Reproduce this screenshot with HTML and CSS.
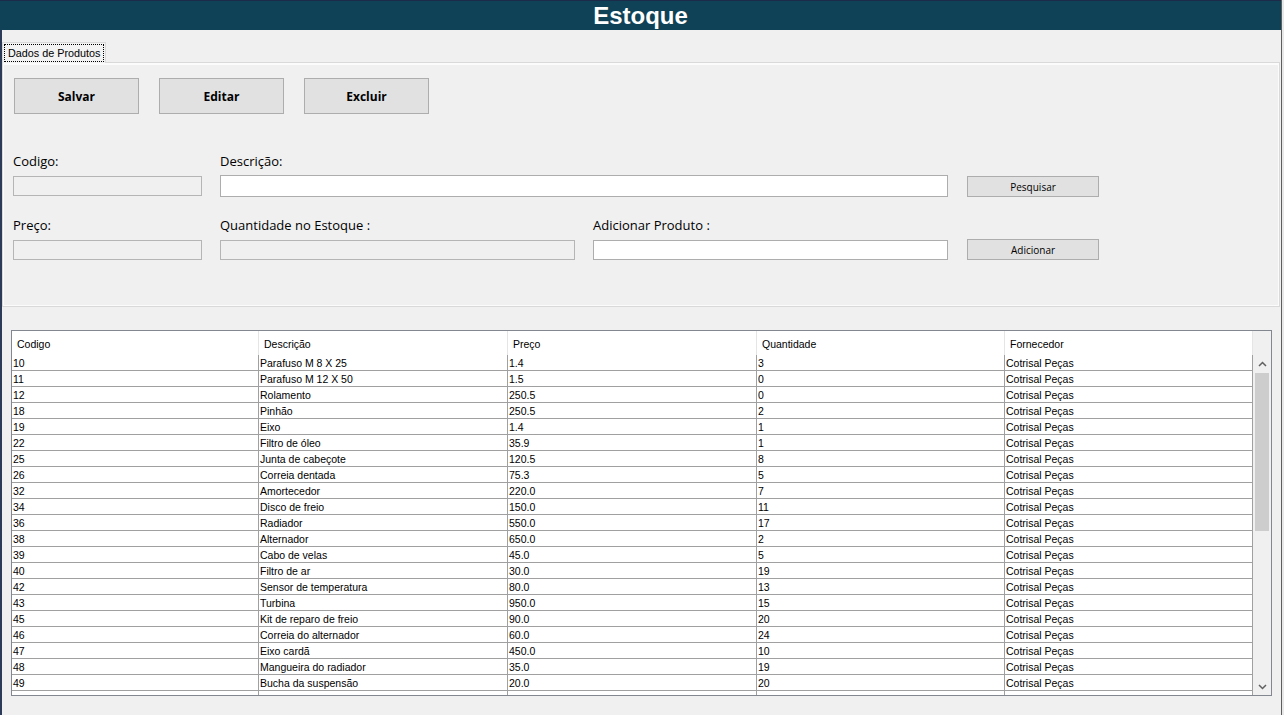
FILE: index.html
```html
<!DOCTYPE html>
<html lang="pt">
<head>
<meta charset="utf-8">
<title>Estoque</title>
<link rel="stylesheet" href="styles.css">
</head>
<body>
<div class="app">
  <header class="titlebar"><h1 class="title">Estoque</h1></header>
  <div class="content">
    <div class="tabstrip">
      <div class="tab"><span class="tab-label">Dados de Produtos</span></div>
    </div>
    <section class="panel">
      <div class="toolbar">
        <button class="btn-big">Salvar</button>
        <button class="btn-big">Editar</button>
        <button class="btn-big">Excluir</button>
      </div>
      <div class="form">
        <div class="field"><label class="lbl">Codigo:</label><input class="inp inp-disabled" disabled></div>
        <div class="field span2"><label class="lbl">Descrição:</label><input class="inp inp-tall"></div>
        <div class="field field-btn"><button class="btn-small">Pesquisar</button></div>

        <div class="field"><label class="lbl">Preço:</label><input class="inp inp-disabled" disabled></div>
        <div class="field"><label class="lbl">Quantidade no Estoque :</label><input class="inp inp-disabled" disabled></div>
        <div class="field"><label class="lbl">Adicionar Produto :</label><input class="inp"></div>
        <div class="field field-btn"><button class="btn-small">Adicionar</button></div>
      </div>
    </section>

    <div class="listview">
      <div class="lv-main">
        <div class="lv-head">
          <div class="hc">Codigo</div>
          <div class="hc">Descrição</div>
          <div class="hc">Preço</div>
          <div class="hc">Quantidade</div>
          <div class="hc">Fornecedor</div>
        </div>
        <div class="lv-body">
          <div class="lv-row"><div>10</div><div>Parafuso M 8 X 25</div><div>1.4</div><div>3</div><div>Cotrisal Peças</div></div>
          <div class="lv-row"><div>11</div><div>Parafuso M 12 X 50</div><div>1.5</div><div>0</div><div>Cotrisal Peças</div></div>
          <div class="lv-row"><div>12</div><div>Rolamento</div><div>250.5</div><div>0</div><div>Cotrisal Peças</div></div>
          <div class="lv-row"><div>18</div><div>Pinhão</div><div>250.5</div><div>2</div><div>Cotrisal Peças</div></div>
          <div class="lv-row"><div>19</div><div>Eixo</div><div>1.4</div><div>1</div><div>Cotrisal Peças</div></div>
          <div class="lv-row"><div>22</div><div>Filtro de óleo</div><div>35.9</div><div>1</div><div>Cotrisal Peças</div></div>
          <div class="lv-row"><div>25</div><div>Junta de cabeçote</div><div>120.5</div><div>8</div><div>Cotrisal Peças</div></div>
          <div class="lv-row"><div>26</div><div>Correia dentada</div><div>75.3</div><div>5</div><div>Cotrisal Peças</div></div>
          <div class="lv-row"><div>32</div><div>Amortecedor</div><div>220.0</div><div>7</div><div>Cotrisal Peças</div></div>
          <div class="lv-row"><div>34</div><div>Disco de freio</div><div>150.0</div><div>11</div><div>Cotrisal Peças</div></div>
          <div class="lv-row"><div>36</div><div>Radiador</div><div>550.0</div><div>17</div><div>Cotrisal Peças</div></div>
          <div class="lv-row"><div>38</div><div>Alternador</div><div>650.0</div><div>2</div><div>Cotrisal Peças</div></div>
          <div class="lv-row"><div>39</div><div>Cabo de velas</div><div>45.0</div><div>5</div><div>Cotrisal Peças</div></div>
          <div class="lv-row"><div>40</div><div>Filtro de ar</div><div>30.0</div><div>19</div><div>Cotrisal Peças</div></div>
          <div class="lv-row"><div>42</div><div>Sensor de temperatura</div><div>80.0</div><div>13</div><div>Cotrisal Peças</div></div>
          <div class="lv-row"><div>43</div><div>Turbina</div><div>950.0</div><div>15</div><div>Cotrisal Peças</div></div>
          <div class="lv-row"><div>45</div><div>Kit de reparo de freio</div><div>90.0</div><div>20</div><div>Cotrisal Peças</div></div>
          <div class="lv-row"><div>46</div><div>Correia do alternador</div><div>60.0</div><div>24</div><div>Cotrisal Peças</div></div>
          <div class="lv-row"><div>47</div><div>Eixo cardã</div><div>450.0</div><div>10</div><div>Cotrisal Peças</div></div>
          <div class="lv-row"><div>48</div><div>Mangueira do radiador</div><div>35.0</div><div>19</div><div>Cotrisal Peças</div></div>
          <div class="lv-row"><div>49</div><div>Bucha da suspensão</div><div>20.0</div><div>20</div><div>Cotrisal Peças</div></div>
          <div class="lv-row"><div>50</div><div>Válvula termostática</div><div>110.0</div><div>12</div><div>Cotrisal Peças</div></div>
        </div>
      </div>
      <div class="lv-side">
        <div class="corner"></div>
        <div class="vscroll">
          <div class="arrow"><svg width="9" height="6" viewBox="0 0 9 6"><polyline points="1,5 4.5,1.5 8,5" fill="none" stroke="#606060" stroke-width="1.5"/></svg></div>
          <div class="thumb"></div>
          <div class="track"></div>
          <div class="arrow"><svg width="9" height="6" viewBox="0 0 9 6"><polyline points="1,1 4.5,4.5 8,1" fill="none" stroke="#606060" stroke-width="1.5"/></svg></div>
        </div>
      </div>
    </div>
  </div>
</div>
</body>
</html>
```

FILE: styles.css
```css
* { box-sizing: border-box; }

html, body {
  margin: 0;
  padding: 0;
  background: #e8e8e8;
  overflow: hidden;
}

body {
  font-family: "Open Sans", "Liberation Sans", sans-serif;
  color: #000;
}

.app {
  width: 1282px;
  height: 715px;
  border-right: 1px solid #5e5e5e;
  background: #f0f0f0;
  display: flex;
  flex-direction: column;
}

.titlebar {
  height: 30px;
  background: #0f4257;
  border-top: 1px solid #1d2b4b;
  display: flex;
  justify-content: center;
  align-items: center;
  flex-shrink: 0;
}

.title {
  margin: 0;
  font-family: "Liberation Sans", Arial, sans-serif;
  font-weight: bold;
  font-size: 24px;
  line-height: 29px;
  color: #fff;
}

.content {
  flex: 1;
  border-left: 2px solid #2b3b58;
  display: flex;
  flex-direction: column;
}

.tabstrip {
  padding-top: 12px;
  display: flex;
}

.tab {
  position: relative;
  z-index: 1;
  width: 104px;
  height: 21px;
  margin-bottom: -1px;
  border: 1px solid #d9d9d9;
  border-bottom: none;
  background: #f3f3f3;
  padding: 1px 0 0 1px;
}

.tab-label {
  display: block;
  width: 100px;
  height: 18px;
  border: 1px dotted #000;
  font-family: "Liberation Sans", Arial, sans-serif;
  font-size: 10.8px;
  line-height: 16px;
  padding-left: 3px;
  white-space: nowrap;
}

.panel {
  height: 245px;
  margin-right: 1px;
  border: 1px solid #d9d9d9;
  box-shadow: inset 1px 2px 0 #fbfbfb, inset -1px -1px 0 #fbfbfb;
  padding: 15px 0 0 11px;
}

.toolbar {
  display: flex;
  gap: 20px;
}

.btn-big {
  width: 125px;
  height: 36px;
  background: #e1e1e1;
  border: 1px solid #adadad;
  font-family: "Open Sans", sans-serif;
  font-weight: bold;
  font-size: 12px;
  color: #000;
  padding: 0;
}

.form {
  margin-top: 38px;
  margin-left: -1px;
  display: grid;
  grid-template-columns: 189px 355px 355px 133px;
  column-gap: 18px;
  row-gap: 19px;
}

.field {
  display: flex;
  flex-direction: column;
}

.span2 { grid-column: span 2; }

.field-btn {
  justify-content: flex-end;
  padding-left: 1px;
}

.lbl {
  height: 18px;
  line-height: 18px;
  margin-bottom: 6px;
  font-size: 13px;
  white-space: nowrap;
}

.inp {
  height: 20px;
  margin: 0;
  border: 1px solid #adadad;
  background: #fff;
  padding: 0 2px;
  font-size: 12px;
}

.inp-tall {
  height: 22px;
  margin-top: -1px;
}

.inp-disabled {
  background: #f0f0f0;
  border-color: #b5b5b5;
}

.btn-small {
  width: 132px;
  height: 21px;
  background: #e1e1e1;
  border: 1px solid #adadad;
  font-family: "Open Sans", sans-serif;
  font-size: 10px;
  color: #000;
  padding: 0;
}

.listview {
  width: 1261px;
  height: 366px;
  margin: 23px 0 0 9px;
  border: 1px solid #828790;
  background: #fff;
  display: flex;
  overflow: hidden;
}

.lv-main {
  width: 1241px;
  display: flex;
  flex-direction: column;
  overflow: hidden;
  font-family: "Liberation Sans", Arial, sans-serif;
  font-size: 10.5px;
}

.lv-head {
  display: grid;
  grid-template-columns: 247px 249px 249px 248px 248px;
  height: 24px;
  flex-shrink: 0;
}

.hc {
  border-right: 1px solid #e5e5e5;
  padding: 1px 0 0 5px;
  line-height: 24px;
  white-space: nowrap;
}

.lv-body {
  display: flex;
  flex-direction: column;
}

.lv-row {
  display: grid;
  grid-template-columns: 247px 249px 249px 248px 248px;
  height: 16px;
  flex-shrink: 0;
  border-bottom: 1px solid #a0a0a0;
}

.lv-row > div {
  border-right: 1px solid #a0a0a0;
  padding: 1px 0 0 1px;
  line-height: 14px;
  white-space: nowrap;
  overflow: hidden;
}

.lv-side {
  width: 18px;
  display: flex;
  flex-direction: column;
}

.corner {
  height: 24px;
  background: #f0f0f0;
}

.vscroll {
  flex: 1;
  background: #f0f0f0;
  display: flex;
  flex-direction: column;
}

.arrow {
  height: 17px;
  display: flex;
  align-items: center;
  justify-content: center;
}

.thumb {
  height: 158px;
  margin: 1px 2px 0;
  background: #cdcdcd;
}

.track { flex: 1; }
```
